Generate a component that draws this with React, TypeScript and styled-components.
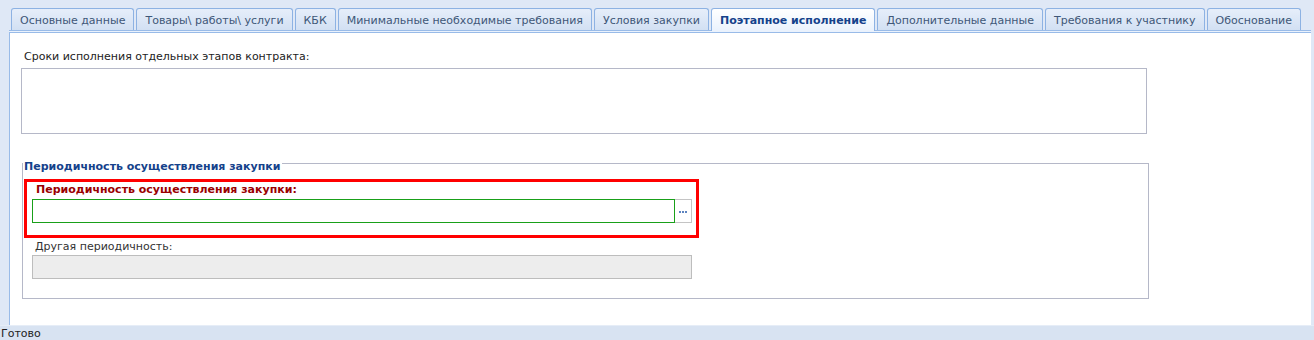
import styled, { createGlobalStyle } from "styled-components";

const GlobalStyle = createGlobalStyle`
    html, body {
        margin: 0;
        padding: 0;
        background: #dfe8f6;
        font-family: "DejaVu Sans", Verdana, sans-serif;
        font-size: 11px;
    }
`;

const tabs = [
    "Основные данные",
    "Товары\\ работы\\ услуги",
    "КБК",
    "Минимальные необходимые требования",
    "Условия закупки",
    "Поэтапное исполнение",
    "Дополнительные данные",
    "Требования к участнику",
    "Обоснование",
];

const ACTIVE = 5;

export default function App() {
    return (
        <Page>
            <GlobalStyle />
            <Main>
                <TabStrip>
                    {tabs.map((t, i) => (
                        <Tab key={t} $active={i === ACTIVE}>
                            {t}
                        </Tab>
                    ))}
                </TabStrip>
                <StripBar />
                <Body>
                    <FieldLabel>Сроки исполнения отдельных этапов контракта:</FieldLabel>
                    <TextArea />
                    <Group>
                        <Legend>Периодичность осуществления закупки</Legend>
                        <Highlight>
                            <RequiredLabel>Периодичность осуществления закупки:</RequiredLabel>
                            <InputRow>
                                <Input $valid />
                                <Trigger>
                                    <Dots>
                                        <i />
                                        <i />
                                        <i />
                                    </Dots>
                                </Trigger>
                            </InputRow>
                        </Highlight>
                        <SubLabel>Другая периодичность:</SubLabel>
                        <Input $disabled />
                    </Group>
                </Body>
            </Main>
            <StatusBar>Готово</StatusBar>
        </Page>
    );
}

const Page = styled.div`
    height: 340px;
    display: flex;
    flex-direction: column;
    overflow: hidden;
`;

const Main = styled.div`
    flex: 1;
    display: flex;
    flex-direction: column;
    padding: 8px 3px 0 9px;
`;

const TabStrip = styled.div`
    display: flex;
    gap: 2px;
    padding-left: 2px;
    height: 22px;
`;

const Tab = styled.div<{ $active?: boolean }>`
    box-sizing: border-box;
    height: ${(p) => (p.$active ? "23px" : "22px")};
    padding: 1px 8px 0;
    display: flex;
    align-items: center;
    border: 1px solid #8db2e3;
    border-bottom: none;
    border-radius: 3px 3px 0 0;
    background: ${(p) =>
        p.$active
            ? "linear-gradient(#ffffff, #eaf2fd)"
            : "linear-gradient(#e6eefa, #d2e0f3)"};
    color: ${(p) => (p.$active ? "#15428b" : "#3e5778")};
    font-weight: ${(p) => (p.$active ? "bold" : "normal")};
    white-space: nowrap;
    position: relative;
    z-index: ${(p) => (p.$active ? 1 : 0)};
`;

const StripBar = styled.div`
    height: 1px;
    background: #eaf2fd;
    border-top: 1px solid #99bbe8;
    border-bottom: 1px solid #99bbe8;
`;

const Body = styled.div`
    flex: 1;
    background: #fff;
    border-left: 1px solid #99bbe8;
    padding: 17px 0 0 11px;
`;

const FieldLabel = styled.div`
    color: #222;
    padding-left: 3px;
    line-height: 13px;
    margin-bottom: 5px;
`;

const TextArea = styled.div`
    box-sizing: border-box;
    width: 1126px;
    height: 66px;
    border: 1px solid #b5b8c8;
    background: #fff;
`;

const Group = styled.fieldset`
    box-sizing: border-box;
    width: 1127px;
    height: 145px;
    margin: 20px 0 0 1px;
    padding: 6px 1px 0 1px;
    border: 1px solid #b5b8c8;
`;

const Legend = styled.legend`
    padding: 6px 2px 0 1px;
    margin-left: -1px;
    font-weight: bold;
    color: #15428b;
    line-height: 13px;
`;

const Highlight = styled.div`
    box-sizing: border-box;
    width: 675px;
    height: 59px;
    border: 3px solid #ff0000;
    padding: 1px 0 0 5px;
`;

const RequiredLabel = styled.div`
    font-weight: bold;
    color: #990000;
    padding-left: 4px;
    line-height: 13px;
    margin-bottom: 3px;
`;

const InputRow = styled.div`
    display: flex;
`;

const Input = styled.div<{ $valid?: boolean; $disabled?: boolean }>`
    box-sizing: border-box;
    height: 24px;
    width: ${(p) => (p.$disabled ? "660px" : "643px")};
    margin-left: ${(p) => (p.$disabled ? "8px" : "0")};
    border: 1px solid ${(p) => (p.$valid ? "#19a019" : "#bdbdbd")};
    background: ${(p) => (p.$disabled ? "#ededed" : "#fff")};
`;

const Trigger = styled.div`
    box-sizing: border-box;
    width: 17px;
    height: 24px;
    border: 1px solid #c4c4c4;
    border-left: none;
    display: flex;
    align-items: center;
    justify-content: center;
    background: #fff;
`;

const Dots = styled.span`
    display: flex;
    gap: 1px;
    margin-top: 2px;

    i {
        width: 2px;
        height: 2px;
        background: #5d84c0;
    }
`;

const SubLabel = styled.div`
    color: #333;
    padding-left: 11px;
    line-height: 13px;
    margin: 2px 0 2px;
`;

const StatusBar = styled.div`
    height: 14px;
    border-top: 1px solid #e6edf7;
    background: #d8e3f2;
    color: #222;
    font-size: 11px;
    line-height: 16px;
    padding-left: 1px;
`;
